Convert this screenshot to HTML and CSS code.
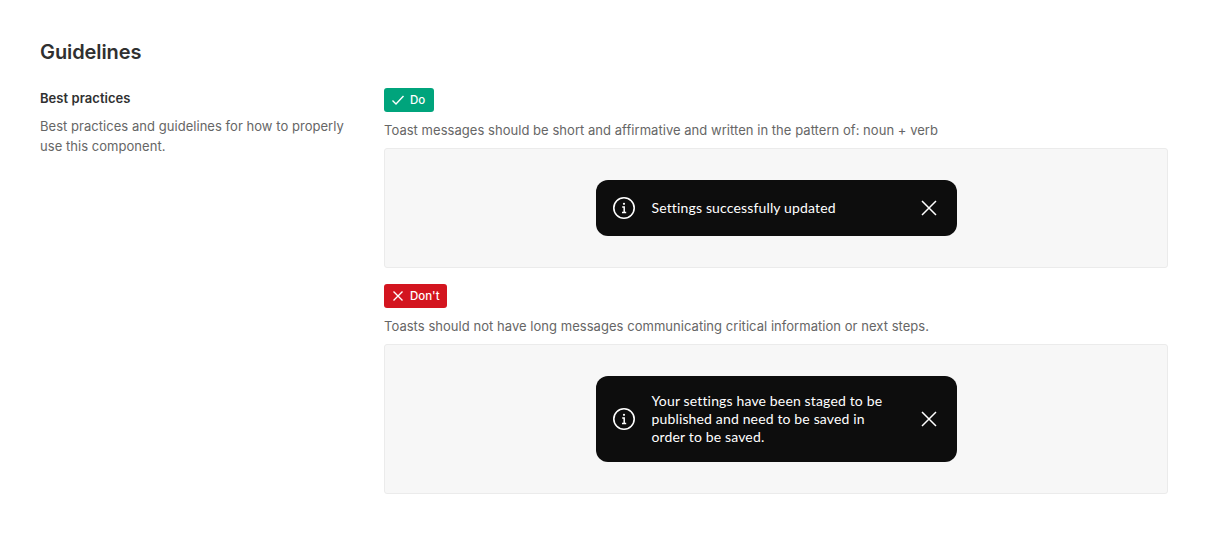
FILE: index.html
```html
<!DOCTYPE html>
<html lang="en">
<head>
    <meta charset="UTF-8">
    <meta name="viewport" content="width=device-width, initial-scale=1.0">
    <title>Guidelines</title>
    <link rel="stylesheet" href="styles.css">
</head>
<body>
    <div class="page">
        <h1 class="title">Guidelines</h1>
        <div class="section">
            <div class="intro">
                <h2>Best practices</h2>
                <p>Best practices and guidelines for how to properly use this component.</p>
            </div>
            <div class="examples">
                <div class="example">
                    <div class="tag tag-do">
                        <svg width="16" height="16" viewBox="0 0 16 16" fill="none" stroke="#fff" stroke-width="1.4"><path d="M2.500 8.500 6 12l7.500-8"/></svg>
                        <span>Do</span>
                    </div>
                    <p class="note">Toast messages should be short and affirmative and written in the pattern of: noun + verb</p>
                    <div class="stage stage-short">
                        <div class="toast">
                            <svg class="info" width="24" height="24" viewBox="0 0 24 24" fill="none" stroke="#fff"><circle cx="12" cy="12" r="10.2" stroke-width="1.6"/><path d="M10.200 11h2v5.200M10 16.400h4.200" stroke-width="1.5"/><circle cx="12" cy="7.800" r="1.100" fill="#fff" stroke="none"/></svg>
                            <span class="msg">Settings successfully updated</span>
                            <svg class="close" width="16" height="16" viewBox="0 0 16 16" fill="none" stroke="#fff" stroke-width="1.5"><path d="M1 1l14 14M15 1 1 15"/></svg>
                        </div>
                    </div>
                </div>
                <div class="example">
                    <div class="tag tag-dont">
                        <svg width="16" height="16" viewBox="0 0 16 16" fill="none" stroke="#fff" stroke-width="1.4"><path d="M3.500 3.500l9 9M12.500 3.500l-9 9"/></svg>
                        <span>Don't</span>
                    </div>
                    <p class="note">Toasts should not have long messages communicating critical information or next steps.</p>
                    <div class="stage stage-long">
                        <div class="toast">
                            <svg class="info" width="24" height="24" viewBox="0 0 24 24" fill="none" stroke="#fff"><circle cx="12" cy="12" r="10.2" stroke-width="1.6"/><path d="M10.200 11h2v5.200M10 16.400h4.200" stroke-width="1.5"/><circle cx="12" cy="7.800" r="1.100" fill="#fff" stroke="none"/></svg>
                            <span class="msg">Your settings have been staged to be published and need to be saved in order to be saved.</span>
                            <svg class="close" width="16" height="16" viewBox="0 0 16 16" fill="none" stroke="#fff" stroke-width="1.5"><path d="M1 1l14 14M15 1 1 15"/></svg>
                        </div>
                    </div>
                </div>
            </div>
        </div>
    </div>
</body>
</html>
```

FILE: styles.css
```css
body, html {
    margin: 0;
    padding: 0;
    background: #fff;
    font-family: Inter, "Liberation Sans", sans-serif;
}

.page {
    padding: 40px 41px 0 40px;
}

.title {
    margin: 0 0 24px;
    font-size: 20px;
    line-height: 24px;
    font-weight: 600;
    letter-spacing: -0.1px;
    color: #303030;
}

.section {
    display: flex;
}

.intro {
    width: 344px;
    flex-shrink: 0;
}

.intro h2 {
    margin: 0;
    font-size: 13px;
    line-height: 20px;
    font-weight: 600;
    letter-spacing: 0.05px;
    color: #303030;
}

.intro p {
    margin: 8px 0 0;
    width: 310px;
    font-size: 13px;
    line-height: 20px;
    letter-spacing: 0.04px;
    color: #666;
}

.examples {
    flex: 1;
    display: flex;
    flex-direction: column;
    gap: 16px;
}

.tag {
    display: inline-flex;
    align-items: center;
    height: 24px;
    padding: 0 7px 0 6px;
    gap: 4px;
    border-radius: 3px;
    color: #fff;
    font-size: 11.5px;
    font-weight: 500;
    vertical-align: top;
}

.tag-do {
    background: #00a47c;
    padding-right: 9px;
}

.tag-dont {
    background: #d3151f;
}

.note {
    margin: 8px 0;
    font-size: 13px;
    line-height: 20px;
    letter-spacing: 0.04px;
    color: #666;
}

.stage {
    display: flex;
    align-items: center;
    justify-content: center;
    box-sizing: border-box;
    background: #f7f7f7;
    border: 1px solid #ebebeb;
    border-radius: 3px;
}

.stage-short {
    height: 120px;
}

.stage-long {
    height: 150px;
}

.toast {
    box-sizing: border-box;
    display: flex;
    align-items: center;
    width: 361px;
    padding: 16px 20px 16px 16px;
    background: #0d0d0d;
    border-radius: 12px;
    color: #fff;
}

.toast .info {
    flex-shrink: 0;
}

.toast .msg {
    flex: 1;
    margin: 0 28px 0 16px;
    font-family: Lato, sans-serif;
    font-size: 14px;
    line-height: 18px;
    letter-spacing: 0.15px;
}

.toast .close {
    flex-shrink: 0;
}
```
